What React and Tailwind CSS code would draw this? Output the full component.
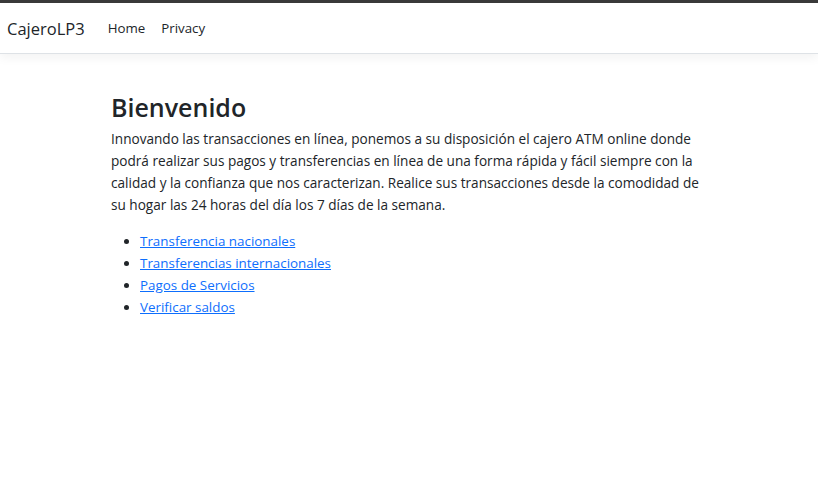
export default function App() {
  const links = [
    "Transferencia nacionales",
    "Transferencias internacionales",
    "Pagos de Servicios",
    "Verificar saldos",
  ];
  return (
    <div className="min-h-[494px] bg-white text-[#212529]" style={{ fontFamily: '"Open Sans", "Noto Sans", sans-serif' }}>
      <div className="h-[3px] bg-[#3a3a3a]" />
      <header className="h-[51px] pt-[2px] border-b border-[#dee2e6] shadow-[0_4px_10px_rgba(0,0,0,0.05)] flex items-center bg-white">
        <span className="ml-[7px] text-[16.5px] text-[#212529]">CajeroLP3</span>
        <nav className="ml-[23px] flex gap-[16px] text-[13.3px] text-[#212529]">
          <a>Home</a>
          <a>Privacy</a>
        </nav>
      </header>
      <main className="mx-[111px] pt-[36px]">
        <h1 className="text-[25px] font-semibold leading-[34px] mb-[4px]">Bienvenido</h1>
        <p className="text-[13.6px] leading-[22px] mb-[14px]">
          Innovando las transacciones en línea, ponemos a su disposición el cajero ATM online donde podrá realizar sus pagos y transferencias en línea de una forma rápida y fácil siempre con la calidad y la confianza que nos caracterizan. Realice sus transacciones desde la comodidad de su hogar las 24 horas del día los 7 días de la semana.
        </p>
        <ul className="list-disc pl-[29px] text-[13.4px] leading-[22px]">
          {links.map((l) => (
            <li key={l}>
              <a className="text-[#0d6efd] underline">{l}</a>
            </li>
          ))}
        </ul>
      </main>
    </div>
  );
}
